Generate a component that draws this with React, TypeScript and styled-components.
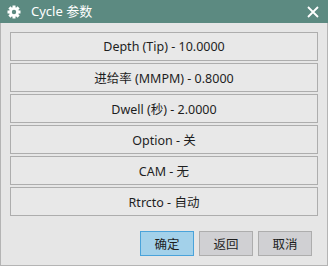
import styled, { createGlobalStyle } from "styled-components";

const GlobalStyle = createGlobalStyle`
  html, body { margin: 0; padding: 0; background: #e6e6e6; }
  * { box-sizing: border-box; }
`;

const Window = styled.div`
  width: 328px;
  height: 266px;
  display: flex;
  flex-direction: column;
  background: #e6e6e6;
  border: 1px solid #b4b4b4;
  border-top: none;
  font-family: "Noto Sans", "Noto Sans CJK SC", sans-serif;
  color: #1e1e1e;
`;

const TitleBar = styled.div`
  height: 23px;
  flex: none;
  display: flex;
  align-items: center;
  background: #5c8a81;
  color: #ffffff;
  padding: 0 9px 0 7px;
  margin: 0 -1px;
`;

const Title = styled.span`
  flex: 1;
  margin-left: 10px;
  font-size: 13px;
  line-height: 23px;
`;

const Body = styled.div`
  flex: 1;
  display: flex;
  flex-direction: column;
  padding: 9px 9px 0 9px;
`;

const ParamList = styled.div`
  display: flex;
  flex-direction: column;
  gap: 2px;
`;

const ParamButton = styled.button`
  height: 29px;
  width: 100%;
  border: 1px solid #adadad;
  background: #e8e8e8;
  font-family: inherit;
  font-size: 12.5px;
  color: #1e1e1e;
  padding: 0;
`;

const Footer = styled.div`
  display: flex;
  justify-content: flex-end;
  gap: 5px;
  padding: 15px 6px 0 0;
`;

const ActionButton = styled.button<{ $primary?: boolean }>`
  width: 54px;
  height: 25px;
  padding: 0;
  font-family: inherit;
  font-size: 12.5px;
  color: #1e1e1e;
  border: 1px solid ${(p) => (p.$primary ? "#4aa3da" : "#adadad")};
  background: ${(p) => (p.$primary ? "#a3d1ea" : "#d0d0d3")};
`;

const GearIcon = () => (
  <svg width="14" height="14" viewBox="0 0 14 14">
    <g fill="#ffffff">
      {[0, 45, 90, 135].map((a) => (
        <rect key={a} x="5.5" y="0.5" width="3" height="13" transform={`rotate(${a} 7 7)`} />
      ))}
      <circle cx="7" cy="7" r="4.8" />
    </g>
    <circle cx="7" cy="7" r="2.2" fill="#5c8a81" />
  </svg>
);

const CloseIcon = () => (
  <svg width="12" height="12" viewBox="0 0 12 12">
    <path d="M1 1 L11 11 M11 1 L1 11" stroke="#ffffff" strokeWidth="1.8" />
  </svg>
);

const params = [
  "Depth (Tip) - 10.0000",
  "进给率 (MMPM) - 0.8000",
  "Dwell (秒) - 2.0000",
  "Option - 关",
  "CAM - 无",
  "Rtrcto - 自动",
];

export default function App() {
  return (
    <>
      <GlobalStyle />
      <Window>
        <TitleBar>
          <GearIcon />
          <Title>Cycle 参数</Title>
          <CloseIcon />
        </TitleBar>
        <Body>
          <ParamList>
            {params.map((p) => (
              <ParamButton key={p}>{p}</ParamButton>
            ))}
          </ParamList>
          <Footer>
            <ActionButton $primary>确定</ActionButton>
            <ActionButton>返回</ActionButton>
            <ActionButton>取消</ActionButton>
          </Footer>
        </Body>
      </Window>
    </>
  );
}
